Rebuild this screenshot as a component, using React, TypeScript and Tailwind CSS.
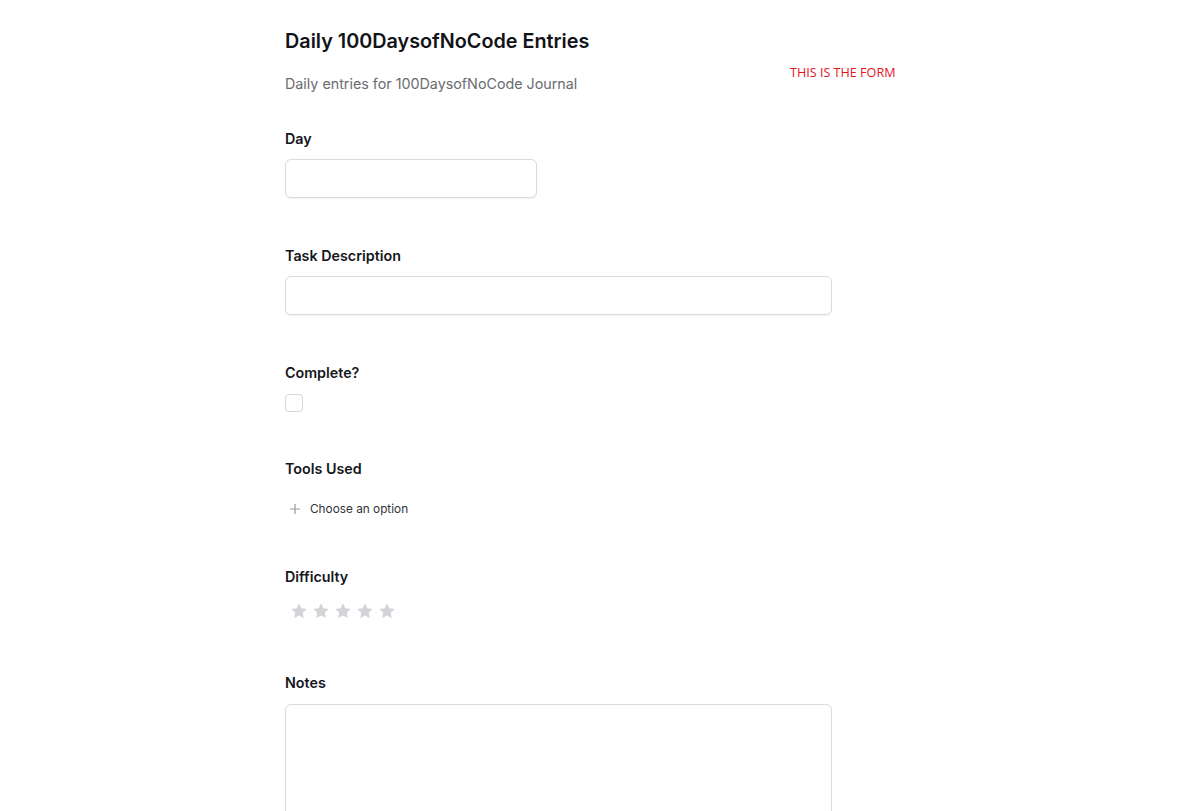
import React from "react";

const Star = () => (
  <svg width="18" height="18" viewBox="0 0 24 24" className="fill-[#d4d4d8]">
    <path d="M12 1.8l3.1 6.6 7.2.9-5.3 5 1.4 7.1L12 17.9l-6.4 3.5 1.4-7.1-5.3-5 7.2-.9z" />
  </svg>
);

function Label({ children, className = "" }: { children: React.ReactNode; className?: string }) {
  return (
    <div className={"text-[14.3px] leading-[22px] font-semibold text-[#15171c] " + className}>
      {children}
    </div>
  );
}

const inputCls =
  "block h-[39px] rounded-[6px] border border-[#dcdcdc] bg-white shadow-[0_1px_1px_rgba(0,0,0,0.06)]";

export default function App() {
  return (
    <div className="h-[811px] overflow-hidden bg-white font-['Inter',sans-serif] antialiased">
      <div className="ml-[285px] w-[611px] pt-[27px]">
        {/* Header */}
        <div className="flex">
          <div className="w-[505px]">
            <h1 className="text-[19.8px] leading-[28px] font-semibold text-[#111318]">
              Daily 100DaysofNoCode Entries
            </h1>
            <p className="mt-[18px] text-[14.3px] leading-[22px] text-[#6b6b70]">
              Daily entries for 100DaysofNoCode Journal
            </p>
          </div>
          <div className="pt-[38px] font-['Open_Sans',sans-serif] text-[12.6px] leading-[16px] text-[#e3151d]">
            THIS IS THE FORM
          </div>
        </div>

        {/* Day */}
        <Label className="mt-[33px]">Day</Label>
        <div className={inputCls + " mt-[9px] w-[252px]"} />

        {/* Task Description */}
        <Label className="mt-[47px]">Task Description</Label>
        <div className={inputCls + " mt-[9px] w-[547px]"} />

        {/* Complete */}
        <Label className="mt-[47px]">Complete?</Label>
        <div className="mt-[10px] h-[18px] w-[18px] rounded-[4px] border border-[#d6d6d6] bg-white" />

        {/* Tools Used */}
        <Label className="mt-[46px]">Tools Used</Label>
        <div className="mt-[19px] flex items-center text-[11.8px] leading-[20px] text-[#333338]">
          <svg width="10" height="10" viewBox="0 0 10 10" className="ml-[5px] mr-[10px] stroke-[#9a9a9f]" strokeWidth="1.2">
            <path d="M5 0v10M0 5h10" />
          </svg>
          Choose an option
        </div>

        {/* Difficulty */}
        <Label className="mt-[47px]">Difficulty</Label>
        <div className="mt-[14px] ml-[5px] flex gap-[4px]">
          <Star />
          <Star />
          <Star />
          <Star />
          <Star />
        </div>

        {/* Notes */}
        <Label className="mt-[52px]">Notes</Label>
        <div className="mt-[10px] h-[150px] w-[547px] rounded-[6px] border border-[#dcdcdc] bg-white shadow-[0_1px_1px_rgba(0,0,0,0.06)]" />
      </div>
    </div>
  );
}
